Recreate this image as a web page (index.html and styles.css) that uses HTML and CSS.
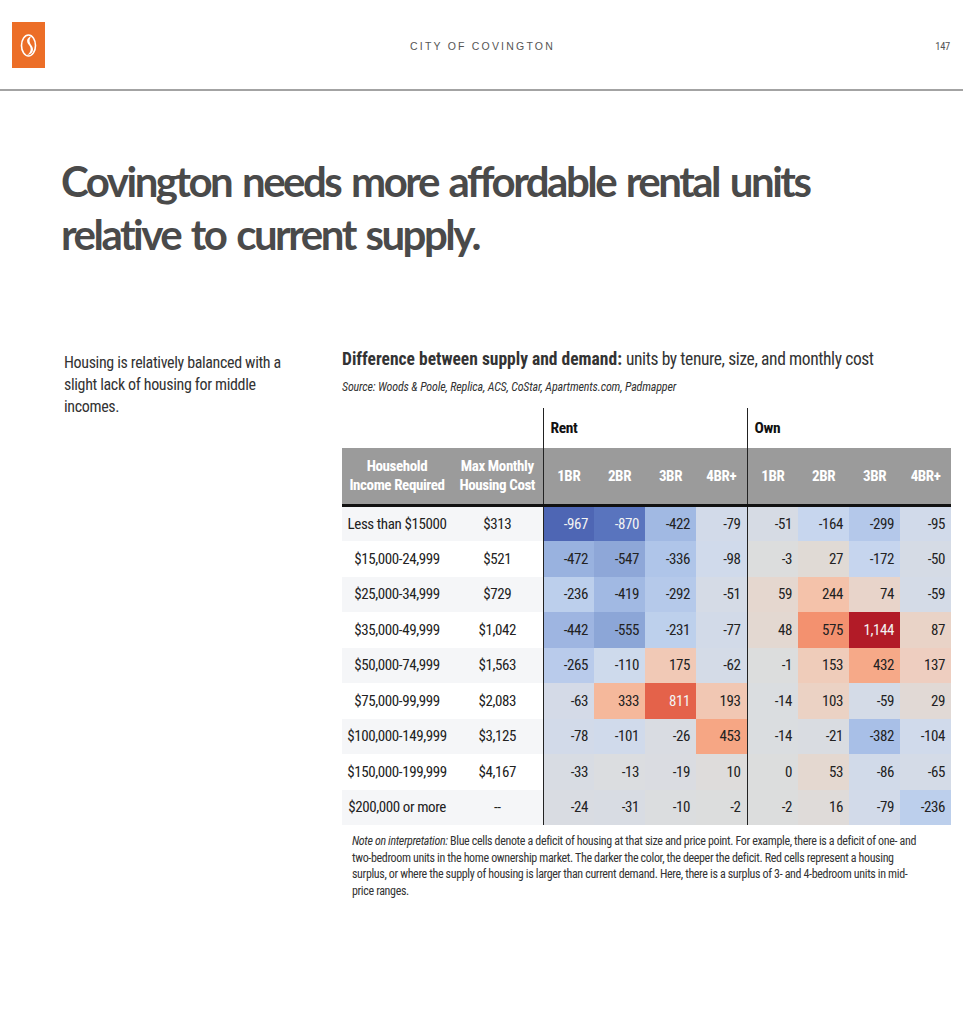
FILE: index.html
```html
<!DOCTYPE html>
<html lang="en">
<head>
<meta charset="utf-8">
<title>City of Covington - 147</title>
<link rel="stylesheet" href="styles.css">
</head>
<body>
<div class="page">
  <header class="topbar">
    <div class="logo">
      <svg width="33" height="46" viewBox="0 0 33 46">
        <rect x="0" y="0" width="33" height="46" fill="#ec6e27"/>
        <ellipse cx="16.5" cy="23.5" rx="7" ry="10.5" fill="none" stroke="#fff" stroke-width="1.6"/>
        <path d="M19.5 14.2 C14.5 15.5 14 19.5 17 23 C19.5 26 19.5 30 15 33.2 C21 32 22.5 27.5 19.5 23.5 C17 20 16.8 17 19.5 14.2 Z" fill="#fff"/>
      </svg>
    </div>
    <div class="city">CITY OF COVINGTON</div>
    <div class="pageno">147</div>
  </header>

  <h1 class="title">Covington needs more affordable rental units<br>relative to current supply.</h1>

  <section class="content">
    <p class="lede">Housing is relatively balanced with a slight lack of housing for middle incomes.</p>

    <div class="chart">
      <h2 class="chart-title"><b>Difference between supply and demand:</b> <span class="sub">units by tenure, size, and monthly cost</span></h2>
      <p class="source">Source: Woods &amp; Poole, Replica, ACS, CoStar, Apartments.com, Padmapper</p>

      <table class="grid">
        <colgroup>
          <col class="c-inc"><col class="c-cost">
          <col class="c-n"><col class="c-n"><col class="c-n"><col class="c-n">
          <col class="c-n"><col class="c-n"><col class="c-n"><col class="c-n">
        </colgroup>
        <thead>
          <tr class="group">
            <th colspan="2"></th>
            <th colspan="4" class="sep">Rent</th>
            <th colspan="4" class="sep">Own</th>
          </tr>
          <tr class="head">
            <th>Household<br>Income Required</th>
            <th>Max Monthly<br>Housing Cost</th>
            <th class="sep">1BR</th><th>2BR</th><th>3BR</th><th>4BR+</th>
            <th class="sep">1BR</th><th>2BR</th><th>3BR</th><th>4BR+</th>
          </tr>
        </thead>
        <tbody>
          <tr>
            <td class="lbl">Less than $15000</td><td class="lbl">$313</td>
            <td class="num sep light" style="background:#4e66b4">-967</td>
            <td class="num light" style="background:#5974be">-870</td>
            <td class="num" style="background:#a1b9e3">-422</td>
            <td class="num" style="background:#d2dae9">-79</td>
            <td class="num sep" style="background:#d6dbe4">-51</td>
            <td class="num" style="background:#c7d6ee">-164</td>
            <td class="num" style="background:#b4c8ea">-299</td>
            <td class="num" style="background:#d1daea">-95</td>
          </tr>
          <tr>
            <td class="lbl">$15,000-24,999</td><td class="lbl">$521</td>
            <td class="num sep" style="background:#99b2df">-472</td>
            <td class="num" style="background:#8ea7d8">-547</td>
            <td class="num" style="background:#afc5e9">-336</td>
            <td class="num" style="background:#d0daeb">-98</td>
            <td class="num sep" style="background:#dcdddd">-3</td>
            <td class="num" style="background:#e0dad5">27</td>
            <td class="num" style="background:#c6d5ee">-172</td>
            <td class="num" style="background:#d5dbe5">-50</td>
          </tr>
          <tr>
            <td class="lbl">$25,000-34,999</td><td class="lbl">$729</td>
            <td class="num sep" style="background:#bccfec">-236</td>
            <td class="num" style="background:#a1b9e3">-419</td>
            <td class="num" style="background:#b5c9ea">-292</td>
            <td class="num" style="background:#d5dbe6">-51</td>
            <td class="num sep" style="background:#e5d7cf">59</td>
            <td class="num" style="background:#f4c2aa">244</td>
            <td class="num" style="background:#e8d4ca">74</td>
            <td class="num" style="background:#d4dbe7">-59</td>
          </tr>
          <tr>
            <td class="lbl">$35,000-49,999</td><td class="lbl">$1,042</td>
            <td class="num sep" style="background:#9eb5e1">-442</td>
            <td class="num" style="background:#8ca6d7">-555</td>
            <td class="num" style="background:#bdd0ec">-231</td>
            <td class="num" style="background:#d2dae8">-77</td>
            <td class="num sep" style="background:#e3d8d1">48</td>
            <td class="num" style="background:#f3916f">575</td>
            <td class="num light" style="background:#b21b27">1,144</td>
            <td class="num" style="background:#e9d3c7">87</td>
          </tr>
          <tr>
            <td class="lbl">$50,000-74,999</td><td class="lbl">$1,563</td>
            <td class="num sep" style="background:#b9cbeb">-265</td>
            <td class="num" style="background:#cedaec">-110</td>
            <td class="num" style="background:#f1c9b6">175</td>
            <td class="num" style="background:#d4dbe7">-62</td>
            <td class="num sep" style="background:#dcdddd">-1</td>
            <td class="num" style="background:#efccba">153</td>
            <td class="num" style="background:#f6a988">432</td>
            <td class="num" style="background:#eecec0">137</td>
          </tr>
          <tr>
            <td class="lbl">$75,000-99,999</td><td class="lbl">$2,083</td>
            <td class="num sep" style="background:#d4dae7">-63</td>
            <td class="num" style="background:#f5b89b">333</td>
            <td class="num light" style="background:#e4624a">811</td>
            <td class="num" style="background:#f1c7b3">193</td>
            <td class="num sep" style="background:#dadde0">-14</td>
            <td class="num" style="background:#ebd2c4">103</td>
            <td class="num" style="background:#d4dbe7">-59</td>
            <td class="num" style="background:#e1d9d5">29</td>
          </tr>
          <tr>
            <td class="lbl">$100,000-149,999</td><td class="lbl">$3,125</td>
            <td class="num sep" style="background:#d2dae9">-78</td>
            <td class="num" style="background:#d0daeb">-101</td>
            <td class="num" style="background:#d9dce2">-26</td>
            <td class="num" style="background:#f6a684">453</td>
            <td class="num sep" style="background:#dadde0">-14</td>
            <td class="num" style="background:#d9dce1">-21</td>
            <td class="num" style="background:#a8bfe7">-382</td>
            <td class="num" style="background:#d0daeb">-104</td>
          </tr>
          <tr>
            <td class="lbl">$150,000-199,999</td><td class="lbl">$4,167</td>
            <td class="num sep" style="background:#d8dce3">-33</td>
            <td class="num" style="background:#dbdde0">-13</td>
            <td class="num" style="background:#dadce1">-19</td>
            <td class="num" style="background:#dedcdb">10</td>
            <td class="num sep" style="background:#dcdddd">0</td>
            <td class="num" style="background:#e4d8d0">53</td>
            <td class="num" style="background:#d1dae9">-86</td>
            <td class="num" style="background:#d4dbe7">-65</td>
          </tr>
          <tr>
            <td class="lbl">$200,000 or more</td><td class="lbl">--</td>
            <td class="num sep" style="background:#d9dce2">-24</td>
            <td class="num" style="background:#d8dce3">-31</td>
            <td class="num" style="background:#dbdddf">-10</td>
            <td class="num" style="background:#dcdddd">-2</td>
            <td class="num sep" style="background:#dcdddd">-2</td>
            <td class="num" style="background:#dfdbd9">16</td>
            <td class="num" style="background:#d2dae9">-79</td>
            <td class="num" style="background:#bccfec">-236</td>
          </tr>
        </tbody>
      </table>

      <p class="note"><i>Note on interpretation:</i> Blue cells denote a deficit of housing at that size and price point. For example, there is a deficit of one- and two-bedroom units in the home ownership market. The darker the color, the deeper the deficit. Red cells represent a housing surplus, or where the supply of housing is larger than current demand. Here, there is a surplus of 3- and 4-bedroom units in mid-price ranges.</p>
    </div>
  </section>
</div>
</body>
</html>
```

FILE: styles.css
```css
html, body {
  margin: 0;
  padding: 0;
  background: #ffffff;
}

.page {
  width: 963px;
  min-height: 1024px;
  font-family: "Roboto Condensed", "Liberation Sans", sans-serif;
  color: #222222;
}

.topbar {
  position: relative;
  height: 89px;
  border-bottom: 2px solid #a3a3a3;
  display: flex;
  align-items: flex-start;
}

.logo {
  margin: 22px 0 0 12px;
  width: 33px;
  height: 46px;
  line-height: 0;
}

.city {
  position: absolute;
  left: 0;
  right: 0;
  top: 40px;
  text-align: center;
  font-family: "Liberation Sans", Arial, sans-serif;
  font-size: 10.5px;
  letter-spacing: 2.2px;
  color: #555555;
  padding-left: 2px;
}

.pageno {
  margin-left: auto;
  margin-top: 40px;
  margin-right: 13px;
  font-size: 10.5px;
  letter-spacing: -0.3px;
  color: #555555;
}

.title {
  margin: 64px 0 0 61px;
  font-family: "Lato", "DejaVu Sans", sans-serif;
  font-weight: 700;
  font-size: 42px;
  line-height: 53px;
  letter-spacing: -2.5px;
  word-spacing: 3px;
  color: #4a4a4a;
}

.content {
  display: flex;
  margin-top: 87px;
}

.lede {
  width: 226px;
  margin: 4px 0 0 64px;
  font-size: 16px;
  letter-spacing: -0.35px;
  line-height: 22px;
  color: #333333;
}

.chart {
  margin-left: 52px;
  width: 610px;
}

.chart-title {
  margin: 0;
  font-size: 17.5px;
  font-weight: 400;
  line-height: 22px;
  color: #333333;
  white-space: nowrap;
}

.chart-title b {
  font-weight: 700;
}

.chart-title .sub {
  letter-spacing: -0.4px;
}

.source {
  margin: 9px 0 0 0;
  font-size: 12px;
  font-style: italic;
  letter-spacing: -0.15px;
  line-height: 16px;
  color: #333333;
}

.grid {
  margin-top: 13px;
  border-collapse: collapse;
  table-layout: fixed;
  width: 609px;
  font-size: 15px;
  letter-spacing: -0.4px;
}

.c-inc { width: 110px; }
.c-cost { width: 91px; }
.c-n { width: 51px; }

.grid th, .grid td {
  padding: 0;
}

.group th {
  height: 40px;
  text-align: left;
  vertical-align: middle;
  font-weight: 700;
  font-size: 15.5px;
  color: #111111;
  padding-left: 7px;
}

.group th.sep {
  border-left: 1px solid #222222;
}

.head th {
  height: 56px;
  background: #9b9b9b;
  color: #ffffff;
  font-weight: 700;
  font-size: 15px;
  line-height: 19px;
  text-align: center;
  vertical-align: middle;
  border-bottom: 3px solid #111111;
}

.head th.sep,
.grid td.sep {
  border-left: 1px solid #222222;
}

.grid tbody tr {
  height: 35.5px;
}

.grid tbody tr:nth-child(odd) td.lbl {
  background: #f5f6f8;
}

.grid td.lbl {
  text-align: center;
  color: #222222;
}

.grid td.num {
  text-align: right;
  padding-right: 6px;
  color: #222222;
}

.grid td.light {
  color: #f3f3f3;
}

.note {
  margin: 8px 0 0 10px;
  width: 573px;
  font-size: 12px;
  letter-spacing: -0.35px;
  line-height: 16.7px;
  color: #333333;
}
```
